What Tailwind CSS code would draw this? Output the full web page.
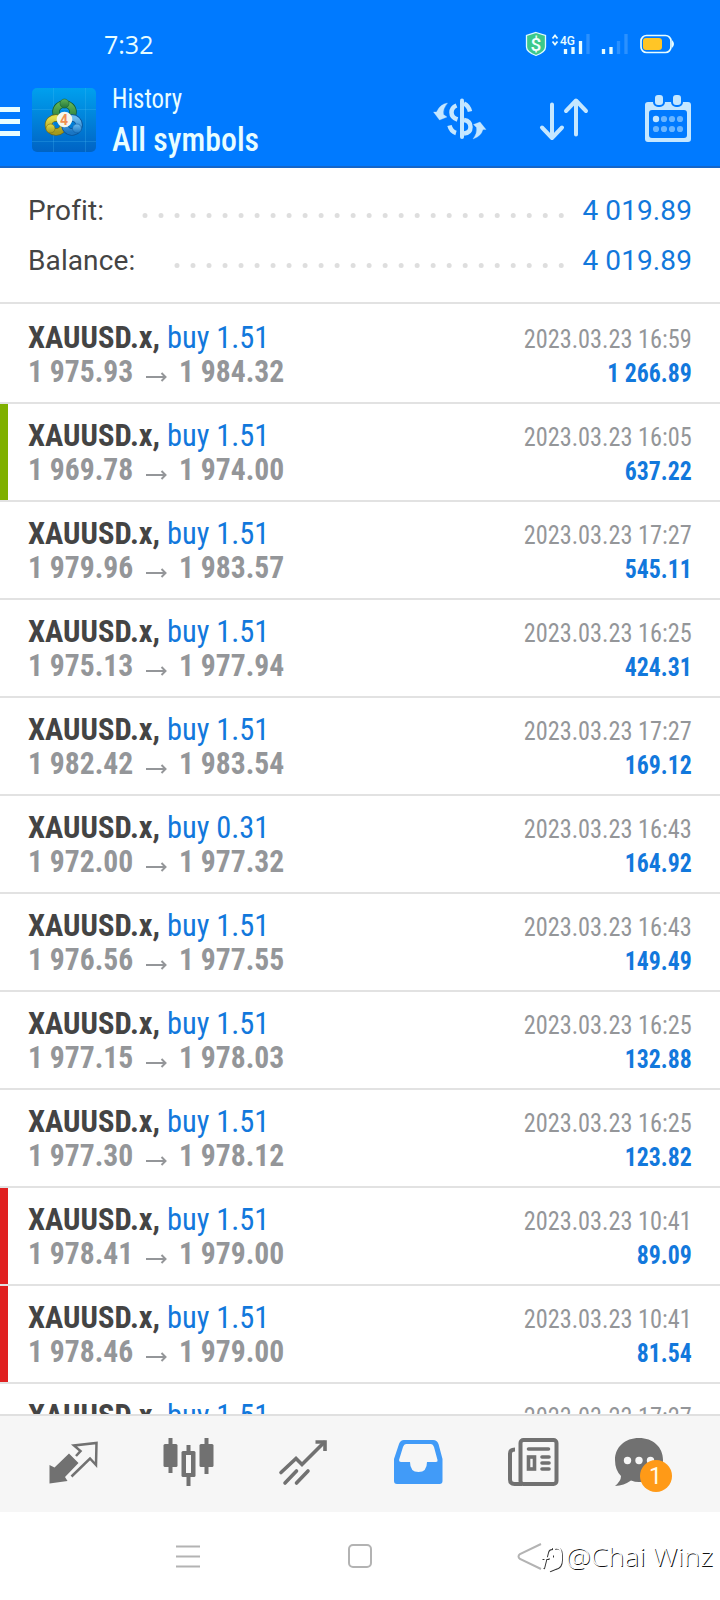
<!DOCTYPE html>
<html lang="en">
<head>
<meta charset="utf-8">
<title>History</title>
<script src="https://cdn.jsdelivr.net/npm/@tailwindcss/browser@4"></script>
</head>
<body class="bg-white">
<div class="flex h-[1600px] w-[720px] flex-col overflow-hidden bg-white font-['Roboto',sans-serif]">
  <header class="flex h-[168px] flex-col border-b-2 border-[#1566c9] bg-[#007aff] text-[#e8fdff]">
    <div class="flex h-[84px] items-center pt-1 pl-[104px]">
      <span class="w-[394px] font-['Open_Sans',sans-serif] text-[25px] leading-8">7:32</span>
      <svg width="190" height="40" viewBox="500 25 190 40" class="ml-0.5">
        <path d="M536 33.500l9.500 3v11.500q0 5-9.500 8.500q-9.500-3.500-9.500-8.500v-11.500z" fill="#3cc98b" stroke="#dffaff" stroke-width="1.300"/>
        <text x="536" y="51.500" font-size="19" font-weight="500" text-anchor="middle" fill="#f2ffff">$</text>
        <path d="M552.500 39.500l2.500-3 2.500 3M552.500 42.500l2.500 3 2.500-3" fill="none" stroke="#e8fdff" stroke-width="1.800"/>
        <text x="560" y="46" font-size="13.500" font-weight="500" fill="#e8fdff" textLength="15" lengthAdjust="spacingAndGlyphs">4G</text>
        <path d="M565.500 50v5M573 48v7M580.500 42v13M603.500 50v5M611 48v7" stroke="#e8fdff" stroke-width="3.300"/>
        <path d="M588 35v20M618.500 42v13M626 35v20" stroke="#2b91ff" stroke-width="3.300"/>
        <rect x="641" y="36.500" width="30" height="17" rx="5.500" fill="none" stroke="#e8fdff" stroke-width="1.700"/>
        <path d="M672 41q4 4 0 8z" fill="#e8fdff"/>
        <rect x="643" y="39" width="19" height="12" rx="3" fill="#ffc526"/>
      </svg>
    </div>
    <div class="flex h-[82px]">
      <svg width="98" height="82" viewBox="0 84 98 82">
        <defs>
          <linearGradient id="tile" x2="0" y2="1"><stop stop-color="#00a0ee"/><stop offset="1" stop-color="#0063c4"/></linearGradient>
          <linearGradient id="gr" x2="0" y2="1"><stop stop-color="#5fb356"/><stop offset="1" stop-color="#22753a"/></linearGradient>
          <linearGradient id="ye" x2="0" y2="1"><stop stop-color="#e3dc4a"/><stop offset="1" stop-color="#a59a1c"/></linearGradient>
          <linearGradient id="bl" x2="0" y2="1"><stop stop-color="#6dbbee"/><stop offset="1" stop-color="#1a76c4"/></linearGradient>
        </defs>
        <path d="M0 109.500h20M0 121.500h20M0 133.500h20" stroke="#e8fdff" stroke-width="5"/>
        <rect x="32" y="88" width="64" height="64" rx="5" fill="url(#tile)"/>
        <path d="M53.500 88v64M85.500 88v64M32 109.500h64M32 141.500h64" stroke="#4dc0f5" stroke-opacity=".25"/>
        <ellipse cx="64.500" cy="112" rx="8.500" ry="8" fill="none" stroke="#145c33" stroke-width="7.500"/>
        <ellipse cx="64.500" cy="112" rx="8.500" ry="8" fill="none" stroke="url(#gr)" stroke-width="6"/>
        <ellipse cx="56" cy="125" rx="7.500" ry="7" fill="none" stroke="#6e6a1a" stroke-width="7.500"/>
        <ellipse cx="56" cy="125" rx="7.500" ry="7" fill="none" stroke="url(#ye)" stroke-width="6"/>
        <ellipse cx="72" cy="125" rx="7" ry="7" fill="none" stroke="#0b5296" stroke-width="7.500"/>
        <ellipse cx="72" cy="125" rx="7" ry="7" fill="none" stroke="url(#bl)" stroke-width="6"/>
        <circle cx="64.500" cy="103.500" r="4.500" fill="url(#gr)" stroke="#17633a" stroke-width=".6"/>
        <circle cx="50.500" cy="128.500" r="4.500" fill="url(#ye)" stroke="#756d1c" stroke-width=".6"/>
        <circle cx="77" cy="128.500" r="4.500" fill="url(#bl)" stroke="#0f5ca5" stroke-width=".6"/>
        <circle cx="64.500" cy="119.500" r="7.800" fill="#f4f7ee"/>
        <text x="64" y="124.500" font-size="14" font-weight="700" text-anchor="middle" fill="#f09050">4</text>
      </svg>
      <div class="flex w-[322px] flex-col pt-px pl-3.5 font-stretch-75%">
        <div class="h-[33px] origin-left scale-x-[0.92] text-[27px] leading-[29px]">History</div>
        <div class="origin-left scale-x-[0.935] text-[34px] leading-[43px] font-medium">All symbols</div>
      </div>
      <svg width="300" height="82" viewBox="420 84 300 82" fill="none" stroke="#c5e7ff">
        <path d="M462 100.500v36.500" stroke-width="4" stroke-linecap="round"/>
        <path d="M456.500 105.500Q451.500 107.500 451.500 112.500T457.500 119.500M464 103.500Q468.500 105.500 470 111.500M464 120Q470.500 121 470.500 127T464 133.500M449.500 125.500Q451 131.500 456 133" stroke-width="4.500"/>
        <path d="M447.500 103Q440 104 436.500 112L433.500 112 439.500 120 447 117 443.500 114.500Q442.500 109 447.500 103zM473 139Q481 136.500 483 129.500L486 129.500 480 122 473.500 124.500 476.500 127.500Q477.500 133.500 473 139z" fill="#c5e7ff" stroke-width=".3"/>
        <path d="M552 104.500v33M542 127.500l10 10.500 10-10.500M576 134.500v-33M566 111l10-10.500 10 10.500" stroke-width="4" stroke-linecap="round" stroke-linejoin="round"/>
        <path d="M648 102h40a3 3 0 0 1 3 3v34a3 3 0 0 1-3 3h-40a3 3 0 0 1-3-3v-34a3 3 0 0 1 3-3zM652 110a3 3 0 0 0-3 3v22a3 3 0 0 0 3 3h32a3 3 0 0 0 3-3v-22a3 3 0 0 0-3-3z" fill="#c5e7ff" fill-rule="evenodd" stroke="none"/>
        <g fill="#c5e7ff" stroke="#007aff" stroke-width="2"><rect x="654" y="94" width="10" height="12" rx="4"/><rect x="672" y="94" width="10" height="12" rx="4"/></g>
        <circle cx="656" cy="119" r="3.200" fill="#c5e7ff" stroke="none"/>
        <path d="M664 119h.01M672 119h.01M680 119h.01M656 129h.01M664 129h.01M672 129h.01M680 129h.01" stroke="#69b5ff" stroke-width="6.200" stroke-linecap="round"/>
      </svg>
    </div>
  </header>

  <section class="flex h-[136px] shrink-0 flex-col border-b-2 border-[#e2e2e2] pt-[18px] text-[28px] leading-[50px] tracking-[0.1px] text-[#444]">
    <div class="flex h-[50px] items-center justify-between pr-7 pl-7">
      <span>Profit:</span>
      <span class="flex items-center gap-[18px]"><svg width="422" height="14"><path d="M3 11.500H421" stroke="#dedede" stroke-width="5" stroke-linecap="round" stroke-dasharray="0 16.010"/></svg><span class="text-[#1278dc]">4 019.89</span></span>
    </div>
    <div class="flex h-[50px] items-center justify-between pr-7 pl-7">
      <span>Balance:</span>
      <span class="flex items-center gap-[18px]"><svg width="390" height="14"><path d="M3 11.500H389" stroke="#dedede" stroke-width="5" stroke-linecap="round" stroke-dasharray="0 16.010"/></svg><span class="text-[#1278dc]">4 019.89</span></span>
    </div>
  </section>

  <main id="deals" class="h-[1110px] shrink-0 overflow-hidden pt-0.5 font-stretch-75%"></main>

  <nav class="h-[98px] shrink-0 border-t-2 border-[#e0e0e0] bg-[#f6f6f6]">
    <svg width="720" height="96" viewBox="0 1416 720 96">
      <g fill="#717171">
        <path d="M49.500 1465l5 2.500 14.500-14 9.500 9.500-13.500 14 2.500 4-18 2.500z"/>
        <path d="M76 1456l4.500-5-6.500-5.500 22.500-2.500-.5 22-6-6.500-18.500 18" fill="none" stroke="#717171" stroke-width="2.500"/>
        <path d="M170.500 1438v35M206.500 1438v36M188.500 1445v41" stroke="#717171" stroke-width="4"/>
        <rect x="163.500" y="1444" width="14" height="23" rx="1.500"/><rect x="199.500" y="1444" width="14" height="23" rx="1.500"/>
        <rect x="181.500" y="1451" width="14" height="26" rx="1.500"/><rect x="186" y="1455" width="5" height="18" fill="#f6f6f6"/>
      </g>
      <g fill="none" stroke="#717171" stroke-width="3.600">
        <path d="M281 1472.500l15-14 6 6 22-22M285 1483l11.500-12M296.500 1483l11.500-12" stroke-linecap="round"/>
        <path d="M315.500 1442h9.500v9"/>
      </g>
      <path d="M404 1440h29q4 0 5.500 4l4 15v22q0 3-3 3h-42.500q-3 0-3-3v-22l5-15q1.500-4 5-4zM406 1444q-2 0-3 3l-4 13q0 2 2 2h9q0 10 8.500 10t8.500-10h9q2 0 1.500-2l-3.500-13q-1-3-3-3z" fill="#419bf8" fill-rule="evenodd"/>
      <g fill="none" stroke="#717171" stroke-width="4">
        <rect x="520.500" y="1440" width="36" height="44" rx="3"/>
        <path d="M515 1449.500q-5 0-5 4v26q0 4.500 4.500 4.500h8"/>
        <path d="M528.500 1449h20M542 1457h7M542 1463h7M542 1469h7" stroke-linecap="round" stroke-width="3.600"/>
        <rect x="528.500" y="1457" width="6" height="12" stroke-width="3.600"/>
      </g>
      <path d="M639 1438c14 0 24 9 24 22s-10 22-24 22q-4 0-8-1.500q-7 5-16 5.500q6-5 6-10q-6-6-6-16c0-13 10-22 24-22z" fill="#717171"/>
      <g fill="#f6f6f6"><circle cx="627.500" cy="1460.500" r="3.700"/><circle cx="639" cy="1460.500" r="3.700"/><circle cx="650.500" cy="1460.500" r="3.700"/></g>
      <circle cx="656" cy="1476" r="16" fill="#ff9a17"/>
      <text x="655.500" y="1484" font-size="23" text-anchor="middle" fill="#fffbe8">1</text>
    </svg>
  </nav>
  <footer class="h-[88px] shrink-0">
    <svg width="720" height="88" viewBox="0 1512 720 88" fill="none" stroke="#b3b3b3" stroke-width="2">
      <path d="M176 1546.500h24M176 1556.500h24M176 1566.500h24"/>
      <rect x="349" y="1545" width="22" height="22" rx="4"/>
      <path d="M541 1544l-21 10q-3 2.500 0 5l21 10"/>
      <g stroke-width="1.800">
        <path d="M544 1569l4-16q1-4 5-4M542.500 1559h7M555 1549q7-2 7 6v5q0 8-6 9l-6 2.500M553 1556.500h1" stroke="#333"/>
        <path d="M543.200 1568.200l4-16q1-4 5-4M541.700 1558.200h7M554.200 1548.200q7-2 7 6v5q0 8-6 9l-6 2.500" stroke="#fff"/>
      </g>
      <g font-family="Open Sans" font-size="26" font-weight="300" stroke="none">
        <text x="566.800" y="1566.800" fill="#111" textLength="147" lengthAdjust="spacingAndGlyphs">@Chai Winz</text>
        <text x="566" y="1566" fill="#fff" textLength="147" lengthAdjust="spacingAndGlyphs" aria-hidden="true">@Chai Winz</text>
      </g>
    </svg>
  </footer>
</div>
<script>
const deals = [
  ["1.51","1 975.93","1 984.32","2023.03.23 16:59","1 266.89",""],
  ["1.51","1 969.78","1 974.00","2023.03.23 16:05","637.22","bg-[#7fb000]"],
  ["1.51","1 979.96","1 983.57","2023.03.23 17:27","545.11",""],
  ["1.51","1 975.13","1 977.94","2023.03.23 16:25","424.31",""],
  ["1.51","1 982.42","1 983.54","2023.03.23 17:27","169.12",""],
  ["0.31","1 972.00","1 977.32","2023.03.23 16:43","164.92",""],
  ["1.51","1 976.56","1 977.55","2023.03.23 16:43","149.49",""],
  ["1.51","1 977.15","1 978.03","2023.03.23 16:25","132.88",""],
  ["1.51","1 977.30","1 978.12","2023.03.23 16:25","123.82",""],
  ["1.51","1 978.41","1 979.00","2023.03.23 10:41","89.09","bg-[#e02020]"],
  ["1.51","1 978.46","1 979.00","2023.03.23 10:41","81.54","bg-[#e02020]"],
  ["1.51","","","2023.03.23 17:27","",""]
];
document.getElementById("deals").innerHTML = deals.map(([vol, open, close, time, profit, mark]) => `
  <div class="flex h-[98px] border-b-2 border-[#e2e2e2]">
    <div class="w-2 ${mark}"></div>
    <div class="flex flex-1 justify-between pt-3.5 pr-7 pl-5 whitespace-nowrap">
      <div class="text-[32px] leading-[34px]">
        <div class="flex"><div class="w-[139px] origin-left scale-x-[0.955] font-bold text-[#444]">XAUUSD.x,</div><div class="origin-left scale-x-[0.95] text-[#1278dc]">buy ${vol}</div></div>
        ${open && `<div class="flex items-center font-bold text-[#949699]"><div class="w-[118px] origin-left scale-x-[0.925]">${open}</div><svg class="mt-2.5 mr-3" width="21" height="12" fill="none" stroke="#949699" stroke-width="2"><path d="M0 7H19M15.500 3L19.500 7L15.500 11"/></svg><div class="origin-left scale-x-[0.925]">${close}</div></div>`}
      </div>
      <div class="pt-0.5 text-right text-[26px] leading-[34px]">
        <div class="origin-right scale-x-[0.935] text-[#949699]">${time}</div>
        <div class="origin-right scale-x-[0.915] font-bold text-[#1278dc]">${profit}</div>
      </div>
    </div>
  </div>`).join("");
</script>
</body>
</html>
